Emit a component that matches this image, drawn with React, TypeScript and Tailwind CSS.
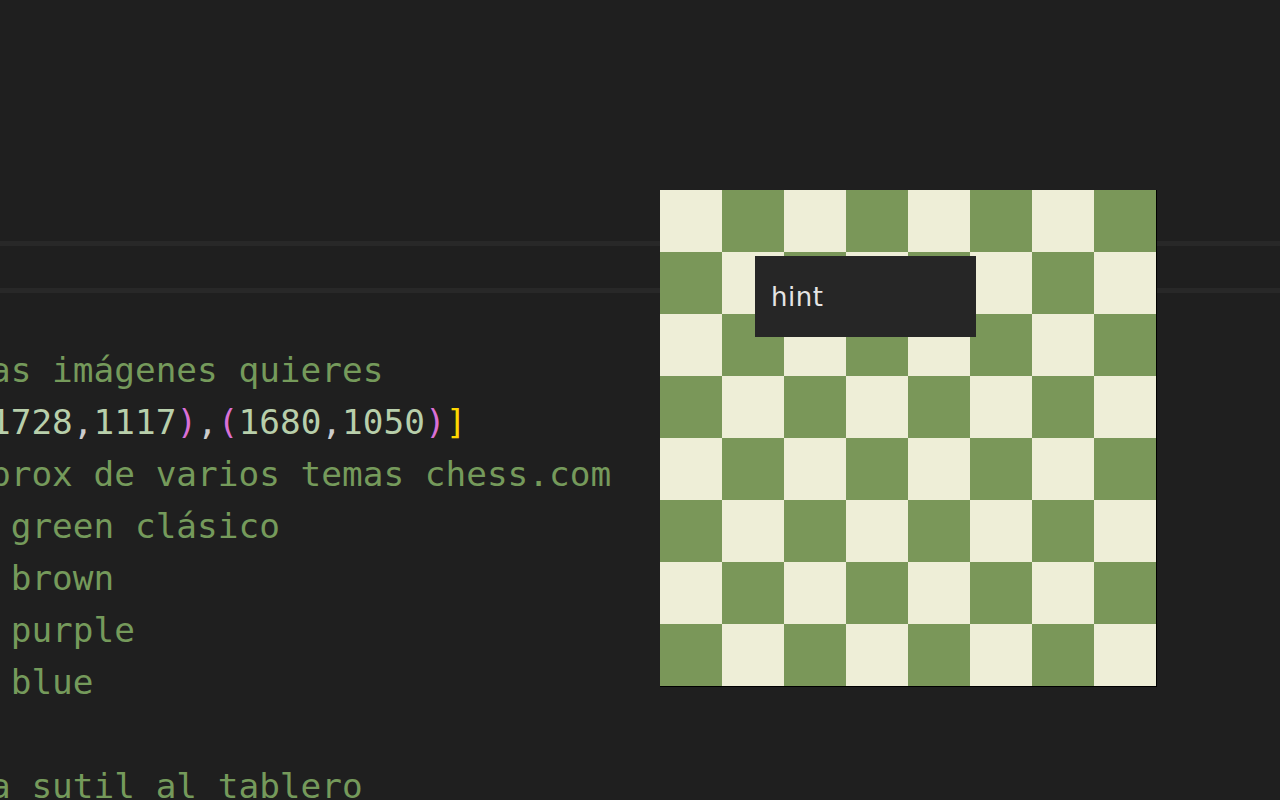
import React from 'react';

const mono = { fontFamily: '"DejaVu Sans Mono", "Liberation Mono", monospace' };

const Comment = ({ children }: { children: React.ReactNode }) => (
  <span className="text-[#759a5b]">{children}</span>
);

function Board() {
  const cells = [];
  for (let r = 0; r < 8; r++) {
    for (let c = 0; c < 8; c++) {
      const dark = (r + c) % 2 === 1;
      cells.push(
        <div key={`${r}-${c}`} className={dark ? 'bg-[#7a9759]' : 'bg-[#eeeed7]'} />
      );
    }
  }
  return (
    <div className="absolute left-[660px] top-[190px] border-r border-b border-black">
      <div className="grid grid-cols-[repeat(8,62px)] grid-rows-[repeat(8,62px)]">{cells}</div>
      <div className="absolute left-[95px] top-[66px] w-[221px] h-[81px] bg-[#262626] px-[16px] pt-[28px]">
        <span
          className="block text-[26px] leading-none text-[#e4e4e4] tracking-[0.5px]"
          style={{ fontFamily: '"DejaVu Sans", sans-serif' }}
        >
          hint
        </span>
      </div>
    </div>
  );
}

export default function App() {
  return (
    <div className="relative w-[1280px] h-[800px] overflow-hidden bg-[#1f1f1f]">
      <div className="h-[241px]" />
      <div className="h-[5px] bg-[#282828]" />
      <div className="h-[42px]" />
      <div className="h-[5px] bg-[#282828]" />
      <div className="h-[51px]" />

      <div className="ml-[-10px] text-[34.4px] leading-[52px] whitespace-pre" style={mono}>
        <div><Comment>as imágenes quieres</Comment></div>
        <div>
          <span className="text-[#b8cfab]">1728</span>
          <span className="text-[#cccccc]">,</span>
          <span className="text-[#b8cfab]">1117</span>
          <span className="text-[#da70d6]">)</span>
          <span className="text-[#cccccc]">,</span>
          <span className="text-[#da70d6]">(</span>
          <span className="text-[#b8cfab]">1680</span>
          <span className="text-[#cccccc]">,</span>
          <span className="text-[#b8cfab]">1050</span>
          <span className="text-[#da70d6]">)</span>
          <span className="text-[#ffd700]">]</span>
        </div>
        <div><Comment>prox de varios temas chess.com</Comment></div>
        <div><Comment> green clásico</Comment></div>
        <div><Comment> brown</Comment></div>
        <div><Comment> purple</Comment></div>
        <div><Comment> blue</Comment></div>
        <div>&nbsp;</div>
        <div><Comment>a sutil al tablero</Comment></div>
      </div>

      <Board />
    </div>
  );
}
